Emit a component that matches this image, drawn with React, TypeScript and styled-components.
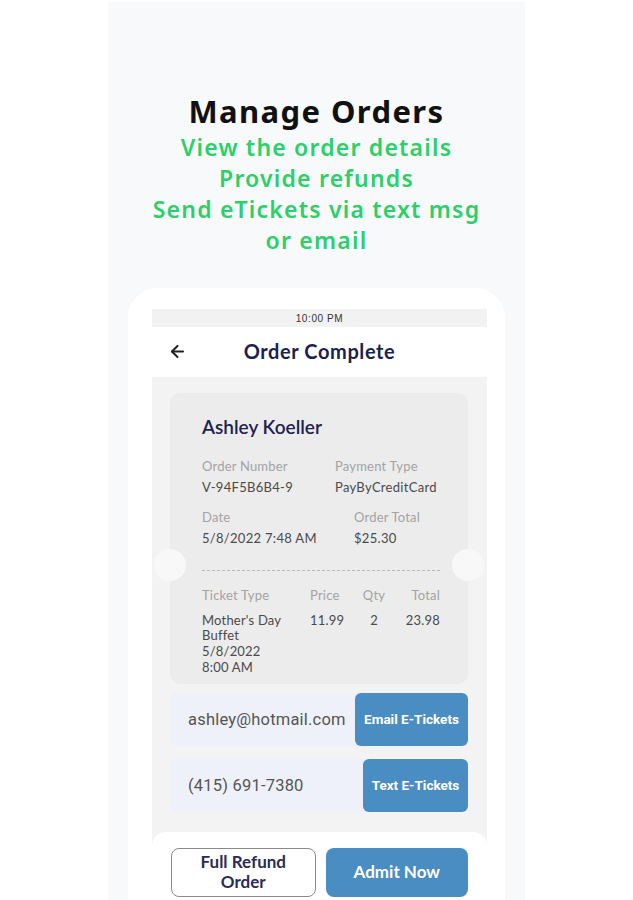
import React from 'react'
import styled, { createGlobalStyle } from 'styled-components'
import { ArrowLeft } from 'lucide-react'

const GlobalStyle = createGlobalStyle`
body {
  margin: 0;
  background: #ffffff;
  font-family: 'Lato', 'Noto Sans', sans-serif;
}
`

const Panel = styled.div`
width: 417px;
height: 898px;
margin: 2px auto 0;
background: #f8f9fb;
display: flex;
flex-direction: column;
align-items: center;
padding-top: 88px;
box-sizing: border-box;
overflow: hidden;
`
const Title = styled.h1`
margin: 0;
font-family: 'Noto Sans', sans-serif;
font-size: 31px;
line-height: 42px;
font-weight: 700;
letter-spacing: 1.4px;
color: #111111;
`
const Subtitle = styled.p`
margin: 0;
font-family: 'Noto Sans', sans-serif;
font-size: 23px;
line-height: 31px;
font-weight: 600;
letter-spacing: 1.2px;
color: #2bd068;
text-align: center;
`
const Phone = styled.div`
margin-top: 32px;
width: 377px;
flex: 1;
background: #ffffff;
border-radius: 30px 30px 0 0;
padding: 21px 18px 0 24px;
box-sizing: border-box;
display: flex;
flex-direction: column;
`
const StatusBar = styled.div`
height: 18px;
background: #f2f2f2;
display: flex;
align-items: center;
justify-content: center;
font-family: 'Liberation Sans', sans-serif;
font-size: 10px;
letter-spacing: 0.6px;
color: #333;
`
const Header = styled.div`
height: 48px;
padding-bottom: 2px;
display: grid;
grid-template-columns: 50px 1fr 50px;
align-items: center;
`
const BackButton = styled.div`
display: flex;
justify-content: center;
color: #222;
`
const HeaderTitle = styled.div`
text-align: center;
font-size: 20px;
font-weight: 700;
letter-spacing: 0.6px;
color: #1c1f4f;
`
const Content = styled.div`
flex: 1;
background: #f3f3f4;
padding: 16px 0 0;
display: flex;
flex-direction: column;
`
const Inner = styled.div`
padding: 0 19px 0 18px;
display: flex;
flex-direction: column;
`
const Ticket = styled.div`
position: relative;
background: #ececec;
border-radius: 10px;
padding: 22px 28px 8px 32px;
&::before, &::after {
  content: '';
  position: absolute;
  top: 156px;
  width: 32px;
  height: 32px;
  border-radius: 50%;
  background: #f8f8f8;
}
&::before { left: -16px; }
&::after { right: -16px; }
`
const Name = styled.div`
font-size: 19px;
line-height: 24px;
font-weight: 600;
color: #1f2150;
margin-bottom: 19px;
`
const InfoRow = styled.div<{ propsCols: string }>`
display: grid;
grid-template-columns: ${props => props.propsCols};
margin-bottom: 14px;
`
const Label = styled.div`
font-size: 13px;
line-height: 16px;
letter-spacing: 0.2px;
color: #a3a3a3;
margin-bottom: 5px;
`
const Value = styled.div`
font-size: 13px;
line-height: 16px;
letter-spacing: 0.3px;
color: #4a4a4a;
`
const Dashed = styled.div`
margin-top: 24px;
border-top: 1.5px dashed #b5b5b5;
margin-bottom: 17px;
`
const Table = styled.div`
display: grid;
grid-template-columns: 108px 42px 44px 1fr;
row-gap: 9px;
font-size: 13px;
line-height: 15.7px;
letter-spacing: 0.2px;
`
const Cell = styled.div<{ propsAlign: string, propsColor: string }>`
text-align: ${props => props.propsAlign};
color: ${props => props.propsColor};
`
const SendRow = styled.div<{ propsTop: string }>`
margin-top: ${props => props.propsTop};
height: 53px;
display: flex;
background: #eef1f9;
border-radius: 6px;
`
const SendInput = styled.div`
flex: 1;
display: flex;
align-items: center;
padding-left: 18px;
font-family: 'Roboto', sans-serif;
font-size: 16.5px;
letter-spacing: 0.2px;
color: #555;
`
const SendButton = styled.div<{ propsWidth: string }>`
width: ${props => props.propsWidth};
background: #4a8dc3;
border-radius: 6px;
display: flex;
align-items: center;
justify-content: center;
font-family: 'Roboto', sans-serif;
font-weight: 700;
font-size: 13.5px;
color: #ffffff;
`
const BottomBar = styled.div`
margin-top: 20px;
flex: 1;
background: #ffffff;
border-radius: 14px 14px 0 0;
padding: 16px 19px 0;
display: flex;
gap: 10px;
`
const ActionButton = styled.div<{ propsPrimary: boolean }>`
flex: 1;
height: 49px;
box-sizing: border-box;
border-radius: 8px;
display: flex;
align-items: center;
justify-content: center;
text-align: center;
font-weight: 700;
font-size: 17px;
line-height: 20px;
background: ${props => props.propsPrimary ? '#4a8dc3' : '#ffffff'};
color: ${props => props.propsPrimary ? '#ffffff' : '#2a2c55'};
border: ${props => props.propsPrimary ? 'none' : '1px solid #8a8a8a'};
`

const App = () => {
    return (
        <>
            <GlobalStyle />
            <Panel>
                <Title>Manage Orders</Title>
                <Subtitle>View the order details<br />Provide refunds<br />Send eTickets via text msg<br />or email</Subtitle>
                <Phone>
                    <StatusBar>10:00 PM</StatusBar>
                    <Header>
                        <BackButton><ArrowLeft size={19} strokeWidth={2.6} /></BackButton>
                        <HeaderTitle>Order Complete</HeaderTitle>
                        <div />
                    </Header>
                    <Content>
                        <Inner>
                            <Ticket>
                                <Name>Ashley Koeller</Name>
                                <InfoRow propsCols='133px 1fr'>
                                    <div><Label>Order Number</Label><Value>V-94F5B6B4-9</Value></div>
                                    <div><Label>Payment Type</Label><Value>PayByCreditCard</Value></div>
                                </InfoRow>
                                <InfoRow propsCols='152px 1fr'>
                                    <div><Label>Date</Label><Value>5/8/2022 7:48 AM</Value></div>
                                    <div><Label>Order Total</Label><Value>$25.30</Value></div>
                                </InfoRow>
                                <Dashed />
                                <Table>
                                    <Cell propsAlign='left' propsColor='#a3a3a3'>Ticket Type</Cell>
                                    <Cell propsAlign='left' propsColor='#a3a3a3'>Price</Cell>
                                    <Cell propsAlign='center' propsColor='#a3a3a3'>Qty</Cell>
                                    <Cell propsAlign='right' propsColor='#a3a3a3'>Total</Cell>
                                    <Cell propsAlign='left' propsColor='#4a4a4a'>Mother's Day<br />Buffet<br />5/8/2022<br />8:00 AM</Cell>
                                    <Cell propsAlign='left' propsColor='#4a4a4a'>11.99</Cell>
                                    <Cell propsAlign='center' propsColor='#4a4a4a'>2</Cell>
                                    <Cell propsAlign='right' propsColor='#4a4a4a'>23.98</Cell>
                                </Table>
                            </Ticket>
                            <SendRow propsTop='9px'>
                                <SendInput>ashley@hotmail.com</SendInput>
                                <SendButton propsWidth='113px'>Email E-Tickets</SendButton>
                            </SendRow>
                            <SendRow propsTop='13px'>
                                <SendInput>(415) 691-7380</SendInput>
                                <SendButton propsWidth='105px'>Text E-Tickets</SendButton>
                            </SendRow>
                        </Inner>
                        <BottomBar>
                            <ActionButton propsPrimary={false}>Full Refund<br />Order</ActionButton>
                            <ActionButton propsPrimary={true}>Admit Now</ActionButton>
                        </BottomBar>
                    </Content>
                </Phone>
            </Panel>
        </>
    )
}

export default App
